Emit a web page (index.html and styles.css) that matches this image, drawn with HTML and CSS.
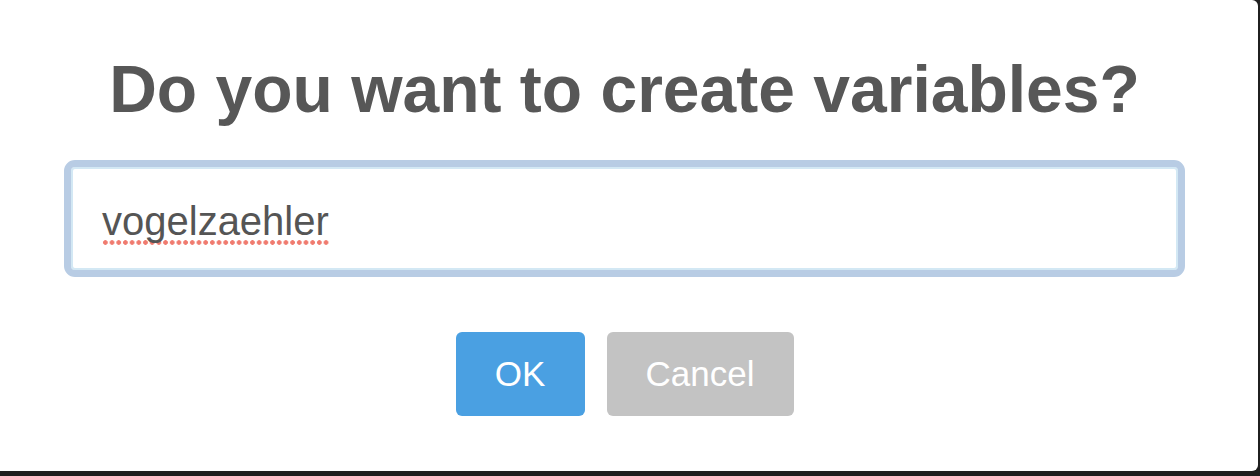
FILE: index.html
```html
<!DOCTYPE html>
<html lang="en">
<head>
<meta charset="utf-8">
<title>Create variables</title>
<link rel="stylesheet" href="styles.css">
</head>
<body>
<div class="page">
  <div class="dialog">
    <h2 class="title">Do you want to create variables?</h2>
    <div class="field"><span class="misspelled">vogelzaehler</span></div>
    <div class="actions">
      <button class="btn btn-ok">OK</button>
      <button class="btn btn-cancel">Cancel</button>
    </div>
  </div>
</div>
</body>
</html>
```

FILE: styles.css
```css
html, body {
  margin: 0;
  padding: 0;
  background: #1f1f1f;
}
.page {
  width: 1260px;
  height: 476px;
  background: #1f1f1f;
  overflow: hidden;
}
.dialog {
  box-sizing: border-box;
  width: 1258px;
  height: 471px;
  background: #ffffff;
  border-radius: 0 6px 6px 0;
  padding: 50px 73px 0 64px;
  display: flex;
  flex-direction: column;
  font-family: "Liberation Sans", Arial, Helvetica, sans-serif;
}
.title {
  margin: 0;
  font-size: 66px;
  line-height: 79px;
  font-weight: bold;
  color: #575757;
  text-align: center;
  height: 79px;
}
.field {
  box-sizing: border-box;
  margin-top: 31px;
  height: 117px;
  border: 7px solid #b8cce4;
  border-radius: 11px;
  box-shadow: inset 0 0 0 2px #d3e8f4;
  padding-left: 31px;
  display: flex;
  align-items: center;
  font-size: 40px;
  color: #555555;
}
.misspelled {
  padding-bottom: 1px;
  margin-top: 7px;
  background: radial-gradient(circle, #f07b6f 0, #f07b6f 2px, rgba(240,123,111,0) 2.6px) left bottom / 6.7px 5px repeat-x;
}
.actions {
  display: flex;
  justify-content: center;
  gap: 22px;
  margin-top: 55px;
}
.btn {
  height: 84px;
  border: none;
  border-radius: 6px;
  color: #ffffff;
  font-family: "Liberation Sans", Arial, Helvetica, sans-serif;
  font-size: 35px;
  padding: 0;
}
.btn-ok {
  width: 129px;
  background: #4aa0e2;
}
.btn-cancel {
  width: 187px;
  background: #c3c3c3;
}
```
